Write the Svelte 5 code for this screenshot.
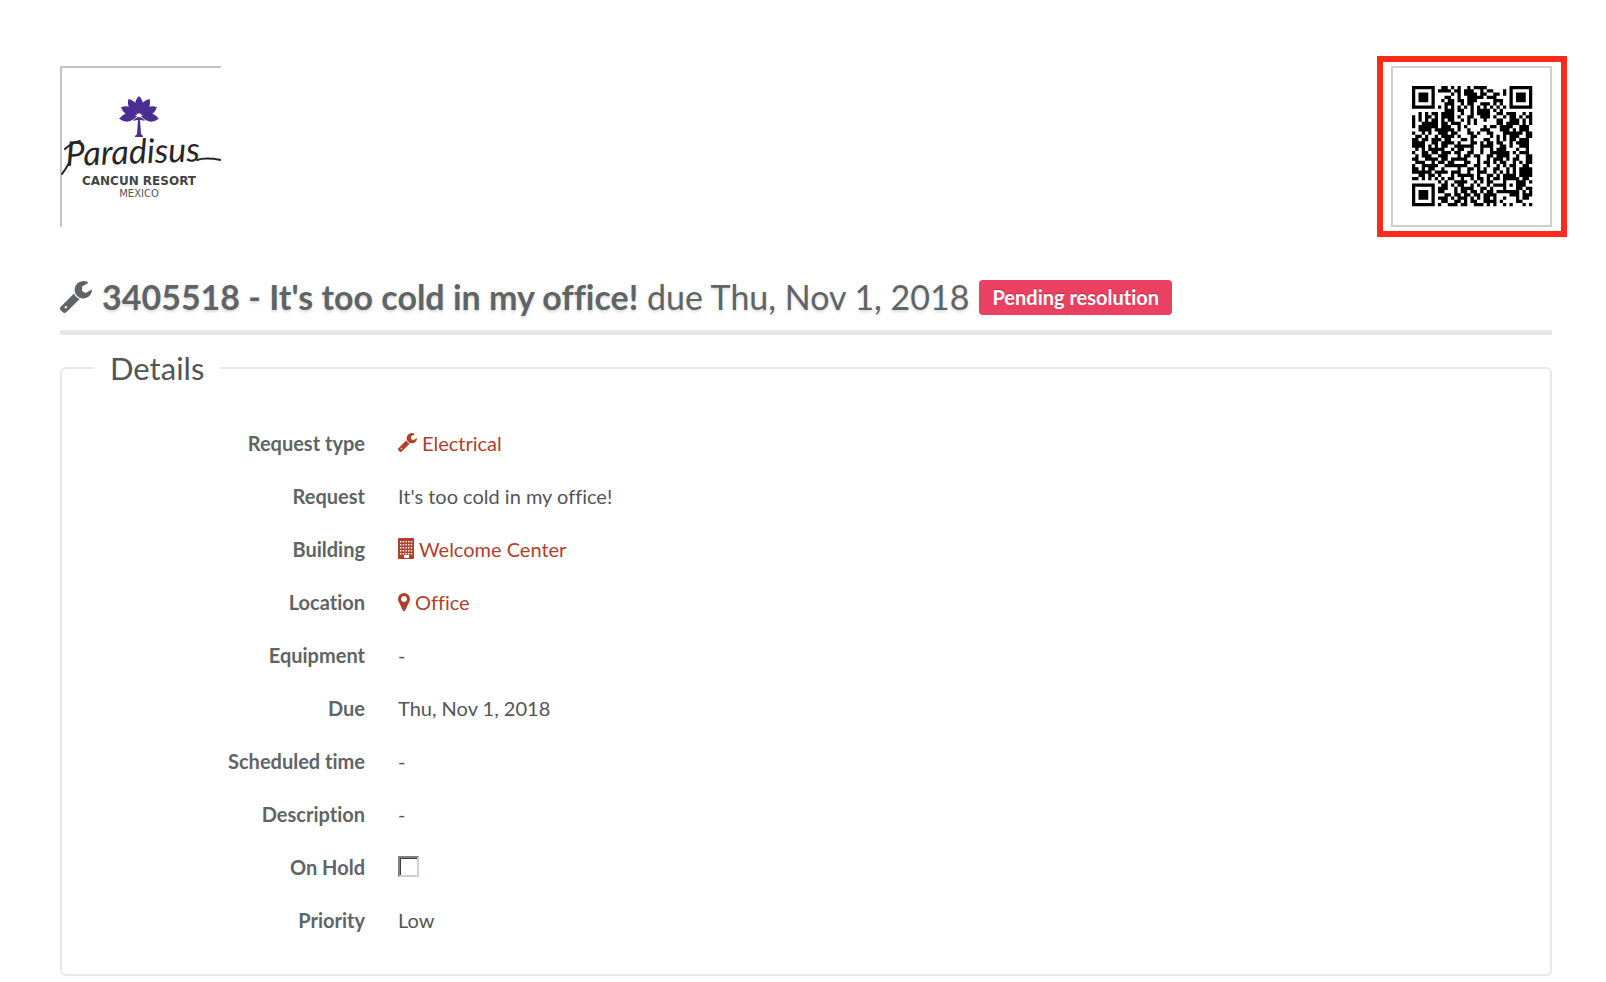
<script lang="ts">
	type Row = {
		label: string;
		value?: string;
		icon?: "wrench" | "building" | "marker";
		checkbox?: boolean;
	};

	const rows: Row[] = [
		{ label: "Request type", value: "Electrical", icon: "wrench" },
		{ label: "Request", value: "It's too cold in my office!" },
		{ label: "Building", value: "Welcome Center", icon: "building" },
		{ label: "Location", value: "Office", icon: "marker" },
		{ label: "Equipment", value: "-" },
		{ label: "Due", value: "Thu, Nov 1, 2018" },
		{ label: "Scheduled time", value: "-" },
		{ label: "Description", value: "-" },
		{ label: "On Hold", checkbox: true },
		{ label: "Priority", value: "Low" },
	];

	let onHold = $state(false);

	const fronds = [-98, -64, -32, 0, 32, 64, 98];

	const code = [
		"#######..##.#.#..#.####.......#######",
		"#.....#.####.##.###..#.##...#.#.....#",
		"#.###.#.....#.#.####.##..##.#.#.###.#",
		"#.###.#...##..#..#####.###....#.###.#",
		"#.###.#..#.##.##.###.....###..#.###.#",
		"#.....#...###..#.##..###.#.#..#.....#",
		"#######.#.#.#.#.#.#.#.#.#.#.#.#######",
		"..........###.##..#.####.#.#.........",
		"..#.#.##.####..#..#.####..##.###..#.#",
		"#.#.##.#.####.#..##..###.#..#.##.#.##",
		"#.#.#.##.#.##..#.#.#..#...##..###.#.#",
		"#..#####.##.###..#.#......##.####.#.#",
		"#.######.###..#.#.....#.##.####..###.",
		"..####.######.#..#...###...###.#.###.",
		"#..#.#..###.##...##.#..##...######.##",
		".##.#..#.####.#...##....#.#.#.###..##",
		"##.##.###.##...##.#...##..#.#.##.###.",
		"####..##.####.#...##.#.##.##..#.####.",
		"####.#.#.##..######..####..##.#..###.",
		".#.#.#####..#.##..#..#..#.###...#..#.",
		"#..##.##.###.##..##..#..######.#.###.",
		".#.###..###...#.##.##..##.####..#..##",
		"##..####.##.#####...#..#.###.#.##..##",
		".###..#.##.##...##..#.##.#.##..#.#.##",
		"#..#####..#######..##..#..#.#.##..##.",
		"##.#.##..#....#..##.#.#..##..#.#.####",
		"######.####.###..#..###..#.#.#.#.####",
		"..##.##.#...#.#####.#..##.#.####.####",
		"##.#.#.#.#.##..#..#.##.#.##.#####.##.",
		"........#.#..####..#.#.##...#...###.#",
		"#######..##.#.##..#.#..#.####.#.###..",
		"#.....#.###..#.####..##.#...#...##.##",
		"#.###.#.##...#.##.##.#.##.#######.#.#",
		"#.###.#...##.##.##.##.####....###.###",
		"#.###.#.###.#.###.#.#.##.#..#...#.##.",
		"#.....#..##..##.#.##..####.#....##...",
		"#######.#..###.##..###.#.#..#.#...#.#",
	];

	const modules = code.flatMap((line, y) =>
		[...line].flatMap((c, x) => (c === "#" ? [`M${x} ${y}h1v1h-1z`] : []))
	);
</script>

{#snippet icon(name)}
	{#if name === "wrench"}
		<svg class="icon wrench" viewBox="85 128 1642 1643" aria-hidden="true">
			<path d="M448 1472q0-26-19-45t-45-19-45 19-19 45 19 45 45 19 45-19 19-45zm644-420l-682 682q-37 37-90 37-52 0-91-37l-106-108q-38-36-38-90 0-53 38-91l681-681q39 98 114.500 173.500t173.500 114.500zm634-435q0 39-23 106-47 134-164.500 217.500t-258.500 83.500q-185 0-316.500-131.500t-131.500-316.500 131.500-316.500 316.500-131.500q58 0 121.500 16.500t107.500 46.500q16 11 16 28t-16 28l-293 169v224l193 107q5-3 79-48.500t135.500-81 70.500-35.500q15 0 23.500 10t8.500 25z" />
		</svg>
	{:else if name === "building"}
		<svg class="icon building" viewBox="0 0 16 21" aria-hidden="true">
			<rect width="16" height="21" rx="1" />
			{#each [3, 6, 9, 12, 15] as y}
				{#each [2, 4.7, 7.4, 10.1, 12.8] as x}
					<rect {x} {y} width="1.4" height="1.5" fill="#fff" />
				{/each}
			{/each}
			<rect x="6" y="17" width="5" height="3" fill="#fff" />
		</svg>
	{:else}
		<svg class="icon marker" viewBox="384 128 1024 1536" aria-hidden="true">
			<path d="M1152 640q0-106-75-181t-181-75-181 75-75 181 75 181 181 75 181-75 75-181zm256 0q0 109-33 179l-364 774q-16 33-47.500 52t-67.500 19-67.500-19-46.500-52l-365-774q-33-70-33-179 0-212 150-362t362-150 362 150 150 362z" />
		</svg>
	{/if}
{/snippet}

<header>
	<svg class="logo" viewBox="0 0 161 161" role="img" aria-label="Paradisus Cancun Resort Mexico">
		<path d="M0 1h161M1 0v161" stroke="#c4c4c4" stroke-width="2" />
		<g fill="#4b2e91">
			{#each fronds as angle}
				<path d="M79 48q-8-10 0-18q8 8 0 18z" transform="rotate({angle} 79 50)" />
			{/each}
			<path d="M73 55q6-8 12 0l-4-1h-4z" />
			<path d="M78 54h2l1 14 2 2v1h-8v-1l2-2z" />
		</g>
		<text class="script" x="6" y="100" transform="rotate(-2 6 100)">Paradisus</text>
		<path d="M5 83q6-6 15-8M9 97q-3 6-7 11M137 94q8-3 24 0" fill="none" stroke="#262626" stroke-width="2" stroke-linecap="round" />
		<text class="place" x="79" y="119" text-anchor="middle">CANCUN RESORT</text>
		<text class="country" x="79" y="131" text-anchor="middle">MEXICO</text>
	</svg>
	<div class="highlight">
		<svg class="qr" viewBox="0 0 161 161" role="img" aria-label="QR code">
			<rect x="1" y="1" width="159" height="159" fill="#fff" stroke="#d0d0d0" stroke-width="2" />
			<path transform="translate(21 20) scale(3.25)" d={modules.join("")} />
		</svg>
	</div>
</header>

<main>
	<h1>
		{@render icon("wrench")}
		<span><strong>3405518 - It's too cold in my office!</strong> due Thu, Nov 1, 2018</span>
		<span class="badge">Pending resolution</span>
	</h1>

	<fieldset>
		<legend>Details</legend>
		<dl>
			{#each rows as row}
				<div class="row">
					<dt>
						{#if row.checkbox}
							<label for="on-hold">{row.label}</label>
						{:else}
							{row.label}
						{/if}
					</dt>
					<dd>
						{#if row.checkbox}
							<input id="on-hold" type="checkbox" bind:checked={onHold} />
						{:else if row.icon}
							<a href="#{row.icon}">{@render icon(row.icon)}{row.value}</a>
						{:else}
							{row.value}
						{/if}
					</dd>
				</div>
			{/each}
		</dl>
	</fieldset>
</main>

<style>
	:global(body) {
		margin: 0;
		background: #fff;
		color: #555;
		font-family: Lato, "Open Sans", sans-serif;
		font-size: 20px;
		font-variant-ligatures: none;
	}

	header {
		display: flex;
		justify-content: space-between;
		align-items: center;
		padding: 56px 39px 0 60px;
	}

	.logo,
	.qr {
		display: block;
		width: 161px;
		height: 161px;
	}

	.highlight {
		padding: 4px 9px 4px 8px;
		border: 6px solid #ff2a1a;
	}

	.script {
		font-size: 34px;
		font-style: italic;
		fill: #262626;
	}

	.place {
		font: bold 12px "DejaVu Sans", sans-serif;
		fill: #444;
	}

	.country {
		font: 10px "DejaVu Sans", sans-serif;
		fill: #555;
	}

	main {
		padding: 0 54px 8px 60px;
	}

	h1 {
		display: flex;
		align-items: center;
		gap: 10px;
		margin: 35px 0 15px;
		padding-bottom: 8px;
		border-bottom: 5px solid #e6e6e6;
		color: #5f6466;
		font-size: 34px;
		font-weight: 400;
		line-height: 50px;
		text-shadow: 0 2px 3px rgba(0, 0, 0, 0.15);
	}

	.badge {
		padding: 0 13px;
		border-radius: 4px;
		background: #ea4062;
		color: #fff;
		font-size: 20px;
		font-weight: 700;
		line-height: 35px;
		text-shadow: 0 -1px 0 rgba(0, 0, 0, 0.25);
	}

	.icon {
		flex: none;
		fill: currentColor;
	}

	.wrench {
		width: 19px;
		height: 19px;
	}

	h1 .wrench {
		width: 32px;
		height: 32px;
	}

	.building {
		width: 16px;
		height: 21px;
	}

	.marker {
		width: 12px;
		height: 18px;
	}

	fieldset {
		margin: 0;
		padding: 30px 0 28px;
		border: 2px solid #e8e8e8;
		border-radius: 6px;
	}

	legend {
		margin-left: 32px;
		padding: 0 16px;
		font-size: 31px;
		line-height: 36px;
	}

	dl {
		margin: 0;
	}

	.row {
		display: grid;
		grid-template-columns: 303px 1fr;
		gap: 33px;
		align-items: center;
		height: 53px;
	}

	dt {
		color: #5f6466;
		font-weight: 700;
		text-align: right;
	}

	dd {
		display: flex;
		align-items: center;
		margin: 0;
	}

	a {
		display: flex;
		align-items: center;
		gap: 5px;
		color: #b0402c;
		text-decoration: none;
	}

	input {
		appearance: none;
		width: 21px;
		height: 21px;
		margin: 0;
		border: 2px solid;
		border-color: #808080 #d4d0c8 #d4d0c8 #808080;
		background: #fff;
		box-shadow: inset 1px 1px 0 #404040;
	}

	input:checked {
		background: #404040;
	}
</style>
